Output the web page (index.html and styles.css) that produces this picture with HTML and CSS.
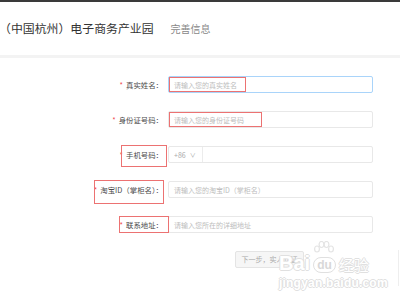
FILE: index.html
```html
<!DOCTYPE html>
<html lang="zh-CN">
<head>
  <meta charset="UTF-8" />
  <title>完善信息</title>
  <link rel="stylesheet" href="styles.css">
</head>
<body>
  <div class="topbar"></div>

  <header>
    <h1>（中国杭州）电子商务产业园</h1>
    <span class="sub">完善信息</span>
  </header>

  <main class="form">
    <div class="row">
      <label class="label"><i>*</i>真实姓名：</label>
      <div class="field focus">
        <span class="ph">请输入您的真实姓名</span>
        <span class="mark mark-1"></span>
      </div>
    </div>

    <div class="row">
      <label class="label"><i>*</i>身份证号码：</label>
      <div class="field">
        <span class="ph">请输入您的身份证号码</span>
        <span class="mark mark-2"></span>
      </div>
    </div>

    <div class="row">
      <label class="label"><i>*</i>手机号码：</label>
      <div class="field">
        <span class="prefix">+86 <b>∨</b></span>
      </div>
      <span class="mark mark-3"></span>
    </div>

    <div class="row">
      <label class="label"><i>*</i>淘宝ID（掌柜名）：</label>
      <div class="field">
        <span class="ph">请输入您的淘宝ID（掌柜名）</span>
      </div>
      <span class="mark mark-4"></span>
    </div>

    <div class="row">
      <label class="label"><i>*</i>联系地址：</label>
      <div class="field">
        <span class="ph">请输入您所在的详细地址</span>
      </div>
      <span class="mark mark-5"></span>
    </div>

    <div class="actions">
      <button class="btn">下一步，实人认证</button>
    </div>
  </main>

  <div class="edge"></div>

  <div class="watermark">
    <div class="wm-logo">
      <span>Bai</span>
      <span class="paw">
        <svg width="22" height="16" viewBox="0 0 22 16">
          <g fill="none" stroke="#e4e4e4" stroke-width="1.2">
            <ellipse cx="4" cy="8" rx="2.4" ry="3"/>
            <ellipse cx="8.5" cy="3.5" rx="2.4" ry="3"/>
            <ellipse cx="13.5" cy="3.5" rx="2.4" ry="3"/>
            <ellipse cx="18" cy="8" rx="2.4" ry="3"/>
          </g>
        </svg>
        <em>du</em>
      </span>
      <span class="cn">经验</span>
    </div>
    <div class="wm-url">jingyan.baidu.com</div>
  </div>
</body>
</html>
```

FILE: styles.css
```css
body {
  margin: 0;
  width: 400px;
  height: 300px;
  overflow: hidden;
  background: #fff;
  font-family: "Noto Sans CJK SC", "Liberation Sans", sans-serif;
  color: #333;
  position: relative;
}

.topbar {
  height: 2px;
  background: #3a3a3a;
}

header {
  height: 53px;
  display: flex;
  align-items: center;
  border-bottom: 3px solid #f3f3f3;
}

header h1 {
  margin: 0 0 2px -1px;
  font-size: 11.9px;
  font-weight: 400;
  color: #333;
}

header .sub {
  margin-left: 17px;
  font-size: 10px;
  color: #888;
}

/* form rows */
.form {
  padding-top: 18px;
}

.row {
  position: relative;
  display: flex;
  align-items: center;
  height: 17px;
  margin-bottom: 18px;
}

.label {
  width: 165px;
  padding-right: 2px;
  box-sizing: border-box;
  text-align: right;
  font-size: 7.4px;
  color: #4a4a4a;
  white-space: nowrap;
}

.label i {
  font-style: normal;
  color: #f04848;
  margin-right: 3px;
}

.field {
  position: relative;
  width: 205px;
  height: 17px;
  box-sizing: border-box;
  border: 1px solid #e8e8e8;
  border-radius: 2px;
  display: flex;
  align-items: center;
  margin-left: 3px;
}

.field.focus {
  border: 1.5px solid #a9d4fa;
}

.ph {
  padding-left: 5px;
  font-size: 7px;
  color: #bdbdbd;
  white-space: nowrap;
}

.prefix {
  width: 34px;
  height: 100%;
  box-sizing: border-box;
  border-right: 1px solid #ececec;
  display: flex;
  align-items: center;
  padding-left: 5px;
  font-size: 7px;
  color: #aaa;
}

.prefix b {
  font-weight: 400;
  margin-left: 4px;
  font-size: 6px;
}

/* red annotation boxes drawn over the screenshot */
.mark {
  position: absolute;
  border: 1px solid #ec7272;
  box-sizing: border-box;
}

.mark-1 { left: 0; top: 0; width: 77px; height: 100%; }
.mark-2 { left: 0; top: 0; width: 93px; height: 100%; }
.mark-3 { left: 121px; top: -1px; width: 46px; height: 22px; }
.mark-4 { left: 94px; top: -1px; width: 70px; height: 24px; }
.mark-5 { left: 119px; top: 0; width: 50px; height: 17px; }

.actions {
  display: flex;
  padding-left: 235px;
}

.btn {
  width: 69px;
  height: 17px;
  padding: 0;
  background: #f6f6f6;
  border: 1px solid #e4e4e4;
  border-radius: 2px;
  font-family: inherit;
  font-size: 7px;
  line-height: 1;
  color: #aaa;
}

.edge {
  position: absolute;
  right: 1px;
  top: 250px;
  width: 1px;
  height: 36px;
  background: #eee;
}

/* baidu jingyan watermark */
.watermark {
  position: absolute;
  left: 279px;
  top: 240px;
  color: #fff;
  text-shadow: 1px 0 #e0e0e0, -1px 0 #e0e0e0, 0 1px #e0e0e0, 0 -1px #e0e0e0;
  font-family: "Liberation Sans", sans-serif;
}

.wm-logo {
  display: flex;
  align-items: flex-end;
  height: 33px;
}

.wm-logo > span:first-child {
  font-size: 20px;
  font-weight: 700;
  line-height: 1;
}

.paw {
  display: flex;
  flex-direction: column;
  align-items: center;
  margin-left: 3px;
}

.paw em {
  font-style: normal;
  font-weight: 700;
  font-size: 12px;
  line-height: 14px;
  padding: 0 3px;
  border: 1px solid #e0e0e0;
  border-radius: 8px;
  text-shadow: none;
  color: #d8d8d8;
}

.wm-logo .cn {
  font-family: "Noto Sans CJK SC", sans-serif;
  font-size: 15px;
  line-height: 1;
  margin-left: 3px;
  margin-bottom: 1px;
}

.wm-url {
  margin-top: 3px;
  font-size: 12px;
  font-weight: 700;
  letter-spacing: 0.2px;
}
```
